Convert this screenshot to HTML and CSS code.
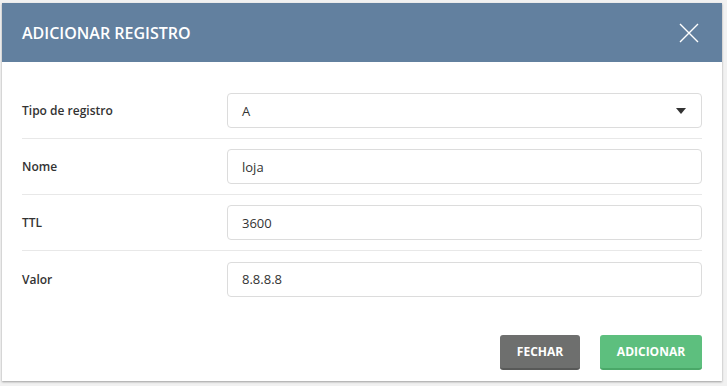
FILE: index.html
```html
<!DOCTYPE html>
<html lang="pt">
<head>
<meta charset="utf-8">
<link rel="stylesheet" href="styles.css">
</head>
<body>
<div class="modal">
  <div class="modal-header">
    <h2 class="modal-title">ADICIONAR REGISTRO</h2>
    <button class="close" aria-label="Fechar">
      <svg width="20" height="20" viewBox="0 0 20 20"><path d="M1 1L19 19M19 1L1 19" stroke="#fff" stroke-width="1.4" fill="none"/></svg>
    </button>
  </div>
  <div class="modal-body">
    <div class="row">
      <label class="label">Tipo de registro</label>
      <div class="field select">
        <span>A</span>
        <svg class="caret" width="10" height="6" viewBox="0 0 10 6"><path d="M0 0H10L5 6Z" fill="#333"/></svg>
      </div>
    </div>
    <div class="row">
      <label class="label">Nome</label>
      <div class="field"><span>loja</span></div>
    </div>
    <div class="row">
      <label class="label">TTL</label>
      <div class="field"><span>3600</span></div>
    </div>
    <div class="row last">
      <label class="label">Valor</label>
      <div class="field"><span>8.8.8.8</span></div>
    </div>
  </div>
  <div class="modal-footer">
    <button class="btn btn-gray">FECHAR</button>
    <button class="btn btn-green">ADICIONAR</button>
  </div>
</div>
</body>
</html>
```
FILE: styles.css
```css
* { box-sizing: border-box; }
html, body { margin: 0; }
body {
  background: #f1f1f1;
  padding: 3px 5px 5px 2px;
  font-family: "Open Sans", "Noto Sans", sans-serif;
  color: #333;
}
.modal {
  width: 720px;
  height: 378px;
  background: #fff;
  box-shadow: 0 1px 2px rgba(0,0,0,0.35);
  display: flex;
  flex-direction: column;
}
.modal-header {
  height: 59px;
  background: #62809f;
  display: flex;
  align-items: center;
  justify-content: space-between;
  padding: 0 23px 0 20px;
}
.modal-title {
  margin: 0;
  color: #fff;
  font-size: 16px;
  font-weight: 600;
}
.close {
  background: none;
  border: 0;
  padding: 0;
  width: 20px;
  height: 20px;
  display: flex;
}
.modal-body {
  padding: 21px 20px 0 20px;
}
.row {
  height: 56px;
  display: flex;
  align-items: center;
  border-bottom: 1px solid #e8e8e8;
}
.row.last { border-bottom: 0; }
.label {
  width: 205px;
  flex: none;
  font-size: 12px;
  font-weight: 600;
  color: #333;
}
.field {
  flex: 1;
  height: 35px;
  border: 1px solid #dcdcdc;
  border-radius: 4px;
  display: flex;
  align-items: center;
  justify-content: space-between;
  padding: 0 15px 0 14px;
  font-size: 13px;
  color: #333;
}
.modal-footer {
  margin-top: auto;
  padding: 0 20px 11px 0;
  display: flex;
  justify-content: flex-end;
  gap: 20px;
}
.btn {
  height: 35px;
  border: 0;
  border-radius: 3px;
  color: #fff;
  font-family: "Open Sans", "Noto Sans", sans-serif;
  font-size: 12px;
  font-weight: 700;
  padding: 0;
}
.btn-gray {
  width: 80px;
  background: #6e6f6e;
  border-bottom: 2px solid #585958;
}
.btn-green {
  width: 102px;
  background: #5dbf7e;
  border-bottom: 2px solid #4aa868;
}
```
